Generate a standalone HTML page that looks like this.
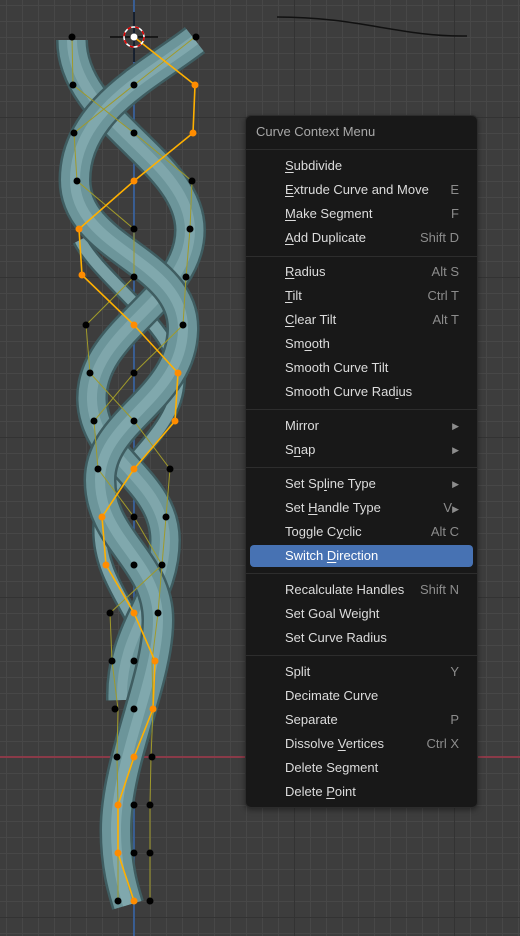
<!DOCTYPE html>
<html><head><meta charset="utf-8"><style>
html,body{margin:0;padding:0;}
body{width:520px;height:936px;overflow:hidden;position:relative;background:#3d3d3d;
font-family:"Liberation Sans","DejaVu Sans",sans-serif;}
.grid{position:absolute;inset:0;
background-image:
linear-gradient(#333 0 1px,transparent 1px),
linear-gradient(90deg,#333 0 1px,transparent 1px),
linear-gradient(#474747 0 1px,transparent 1px),
linear-gradient(90deg,#474747 0 1px,transparent 1px);
background-size:520px 160px,160px 936px,16px 16px,16px 16px;
background-position:0 117px,134px 0,0 5px,6px 0;}
.menu{position:absolute;left:245px;top:115px;width:233px;height:693px;background:#181818;border:1px solid #2c2c2c;border-radius:6px;box-sizing:border-box;box-shadow:0 2px 6px rgba(0,0,0,.4);}
.it{position:absolute;left:39px;right:18px;height:22px;line-height:22px;font-size:13px;color:#dcdcdc;}
.it .k{position:absolute;right:0;top:0;color:#8c8c8c;}
.sep{position:absolute;left:0;right:0;height:1px;background:#2d2d2d;}
.hl{position:absolute;left:4px;width:223px;top:429px;height:22px;background:#4772b3;border-radius:4px;}
u{text-decoration:underline;text-underline-offset:2px;}
.arr{font-size:9px;}
</style></head><body>
<div class="grid"></div>
<svg width="520" height="936" style="position:absolute;left:0;top:0">
<line x1="0" y1="757" x2="520" y2="757" stroke="#8a3a48" stroke-width="2"/>
<line x1="134" y1="0" x2="134" y2="936" stroke="#3a6ab0" stroke-width="1.5"/>
<path d="M277,17 C360,17 400,37 467,36" stroke="#111" stroke-width="1.5" fill="none"/>
<g fill="none" stroke-linecap="butt">
<path d="M80,240 C100,280 180,330 178,380 C176,440 100,470 100,530 C100,590 150,620 150,680 C150,720 140,740 135,760" stroke="#3d5a5e" stroke-width="16"/>
<path d="M80,240 C100,280 180,330 178,380 C176,440 100,470 100,530 C100,590 150,620 150,680 C150,720 140,740 135,760" stroke="#7aa1a6" stroke-width="11"/>
<path d="M72,40 C72,120 190,160 190,230 C190,300 90,330 92,400 C94,460 165,480 165,540 C165,600 120,630 122,700" stroke="#3f5d61" stroke-width="32"/>
<path d="M72,40 C72,120 190,160 190,230 C190,300 90,330 92,400 C94,460 165,480 165,540 C165,600 120,630 122,700" stroke="#6c959a" stroke-width="27"/>
<path d="M72,40 C72,120 190,160 190,230 C190,300 90,330 92,400 C94,460 165,480 165,540 C165,600 120,630 122,700" stroke="#7fa6ab" stroke-width="10"/>
<path d="M195,40 C150,75 75,110 75,180 C75,250 185,260 183,330 C181,400 100,420 100,480 C100,540 158,560 158,620 C158,680 116,760 116,830 C116,870 125,895 128,905" stroke="#3f5d61" stroke-width="33"/>
<path d="M195,40 C150,75 75,110 75,180 C75,250 185,260 183,330 C181,400 100,420 100,480 C100,540 158,560 158,620 C158,680 116,760 116,830 C116,870 125,895 128,905" stroke="#6c959a" stroke-width="28"/>
<path d="M195,40 C150,75 75,110 75,180 C75,250 185,260 183,330 C181,400 100,420 100,480 C100,540 158,560 158,620 C158,680 116,760 116,830 C116,870 125,895 128,905" stroke="#80a8ad" stroke-width="10"/>
</g>
<polyline fill="none" stroke="#a09a2a" stroke-width="1" points="72,37 73,85 134,133 192,181 190,229 186,277 183,325 134,373 94,421 98,469 134,517 162,565 158,613 152,661 153,709 151,757 150,805 150,853 150,901"/>
<polyline fill="none" stroke="#a09a2a" stroke-width="1" points="195,37 134,85 74,133 77,181 134,229 134,277 86,325 90,373 134,421 170,469 166,517 162,565 110,613 112,661 118,709 117,757 118,805 118,853 118,901"/>
<polyline fill="none" stroke="#ffb000" stroke-width="1.6" points="134,37 195,85 193,133 134,181 79,229 82,275 134,325 178,373 175,421 134,469 102,517 106,565 134,613 155,661 153,709 134,757 118,805 118,853 134,901"/>
<g fill="#ff8c00">
<circle cx="195" cy="85" r="3.5"/><circle cx="193" cy="133" r="3.5"/><circle cx="134" cy="181" r="3.5"/><circle cx="79" cy="229" r="3.5"/><circle cx="82" cy="275" r="3.5"/><circle cx="134" cy="325" r="3.5"/><circle cx="178" cy="373" r="3.5"/><circle cx="175" cy="421" r="3.5"/><circle cx="134" cy="469" r="3.5"/><circle cx="102" cy="517" r="3.5"/><circle cx="106" cy="565" r="3.5"/><circle cx="134" cy="613" r="3.5"/><circle cx="155" cy="661" r="3.5"/><circle cx="153" cy="709" r="3.5"/><circle cx="134" cy="757" r="3.5"/><circle cx="118" cy="805" r="3.5"/><circle cx="118" cy="853" r="3.5"/><circle cx="134" cy="901" r="3.5"/>
</g>
<g fill="#000">
<circle cx="72" cy="37" r="3.5"/><circle cx="196" cy="37" r="3.5"/><circle cx="73" cy="85" r="3.5"/><circle cx="134" cy="85" r="3.5"/><circle cx="74" cy="133" r="3.5"/><circle cx="134" cy="133" r="3.5"/><circle cx="77" cy="181" r="3.5"/><circle cx="192" cy="181" r="3.5"/><circle cx="134" cy="229" r="3.5"/><circle cx="190" cy="229" r="3.5"/><circle cx="134" cy="277" r="3.5"/><circle cx="186" cy="277" r="3.5"/><circle cx="86" cy="325" r="3.5"/><circle cx="183" cy="325" r="3.5"/><circle cx="90" cy="373" r="3.5"/><circle cx="134" cy="373" r="3.5"/><circle cx="94" cy="421" r="3.5"/><circle cx="134" cy="421" r="3.5"/><circle cx="98" cy="469" r="3.5"/><circle cx="170" cy="469" r="3.5"/><circle cx="134" cy="517" r="3.5"/><circle cx="166" cy="517" r="3.5"/><circle cx="134" cy="565" r="3.5"/><circle cx="162" cy="565" r="3.5"/><circle cx="110" cy="613" r="3.5"/><circle cx="158" cy="613" r="3.5"/><circle cx="112" cy="661" r="3.5"/><circle cx="134" cy="661" r="3.5"/><circle cx="115" cy="709" r="3.5"/><circle cx="134" cy="709" r="3.5"/><circle cx="117" cy="757" r="3.5"/><circle cx="152" cy="757" r="3.5"/><circle cx="134" cy="805" r="3.5"/><circle cx="150" cy="805" r="3.5"/><circle cx="134" cy="853" r="3.5"/><circle cx="150" cy="853" r="3.5"/><circle cx="118" cy="901" r="3.5"/><circle cx="150" cy="901" r="3.5"/>
</g>
<line x1="110" y1="37" x2="158" y2="37" stroke="#000" stroke-width="1.2"/>
<line x1="134" y1="12" x2="134" y2="62" stroke="#000" stroke-width="1.2"/>
<circle cx="134" cy="37" r="10" fill="none" stroke="#fff" stroke-width="1.5"/>
<circle cx="134" cy="37" r="10" fill="none" stroke="#d00" stroke-width="1.5" stroke-dasharray="4 4"/>
<circle cx="134" cy="37" r="3.5" fill="#fff"/>
</svg>
<div class="menu">
<div style="position:absolute;left:10px;top:8px;font-size:13px;color:#a8a8a8;">Curve Context Menu</div>
<div class="sep" style="top:33px"></div>
<div class="hl"></div>
<div class="it" style="top:39px"><u>S</u>ubdivide</div>
<div class="it" style="top:63px"><u>E</u>xtrude Curve and Move<span class="k">E</span></div>
<div class="it" style="top:87px"><u>M</u>ake Segment<span class="k">F</span></div>
<div class="it" style="top:111px"><u>A</u>dd Duplicate<span class="k">Shift D</span></div>
<div class="sep" style="top:140px"></div>
<div class="it" style="top:145px"><u>R</u>adius<span class="k">Alt S</span></div>
<div class="it" style="top:169px"><u>T</u>ilt<span class="k">Ctrl T</span></div>
<div class="it" style="top:193px"><u>C</u>lear Tilt<span class="k">Alt T</span></div>
<div class="it" style="top:217px">Sm<u>o</u>oth</div>
<div class="it" style="top:241px">Smooth Curve Tilt</div>
<div class="it" style="top:265px">Smooth Curve Rad<u>i</u>us</div>
<div class="sep" style="top:293px"></div>
<div class="it" style="top:299px">Mirror<span class="k arr">▶</span></div>
<div class="it" style="top:323px">S<u>n</u>ap<span class="k arr">▶</span></div>
<div class="sep" style="top:351px"></div>
<div class="it" style="top:357px">Set Sp<u>l</u>ine Type<span class="k arr">▶</span></div>
<div class="it" style="top:381px">Set <u>H</u>andle Type<span class="k">V<span class="arr">▶</span></span></div>
<div class="it" style="top:405px">Toggle C<u>y</u>clic<span class="k">Alt C</span></div>
<div class="it" style="top:429px;color:#fff">Switch <u>D</u>irection</div>
<div class="sep" style="top:457px"></div>
<div class="it" style="top:463px">Recalculate Handles<span class="k">Shift N</span></div>
<div class="it" style="top:487px">Set Goal Weight</div>
<div class="it" style="top:511px">Set Curve Radius</div>
<div class="sep" style="top:539px"></div>
<div class="it" style="top:545px">Split<span class="k">Y</span></div>
<div class="it" style="top:569px">Decimate Curve</div>
<div class="it" style="top:593px">Separate<span class="k">P</span></div>
<div class="it" style="top:617px">Dissolve <u>V</u>ertices<span class="k">Ctrl X</span></div>
<div class="it" style="top:641px">Delete Segment</div>
<div class="it" style="top:665px">Delete <u>P</u>oint</div>
</div>
</body></html>
